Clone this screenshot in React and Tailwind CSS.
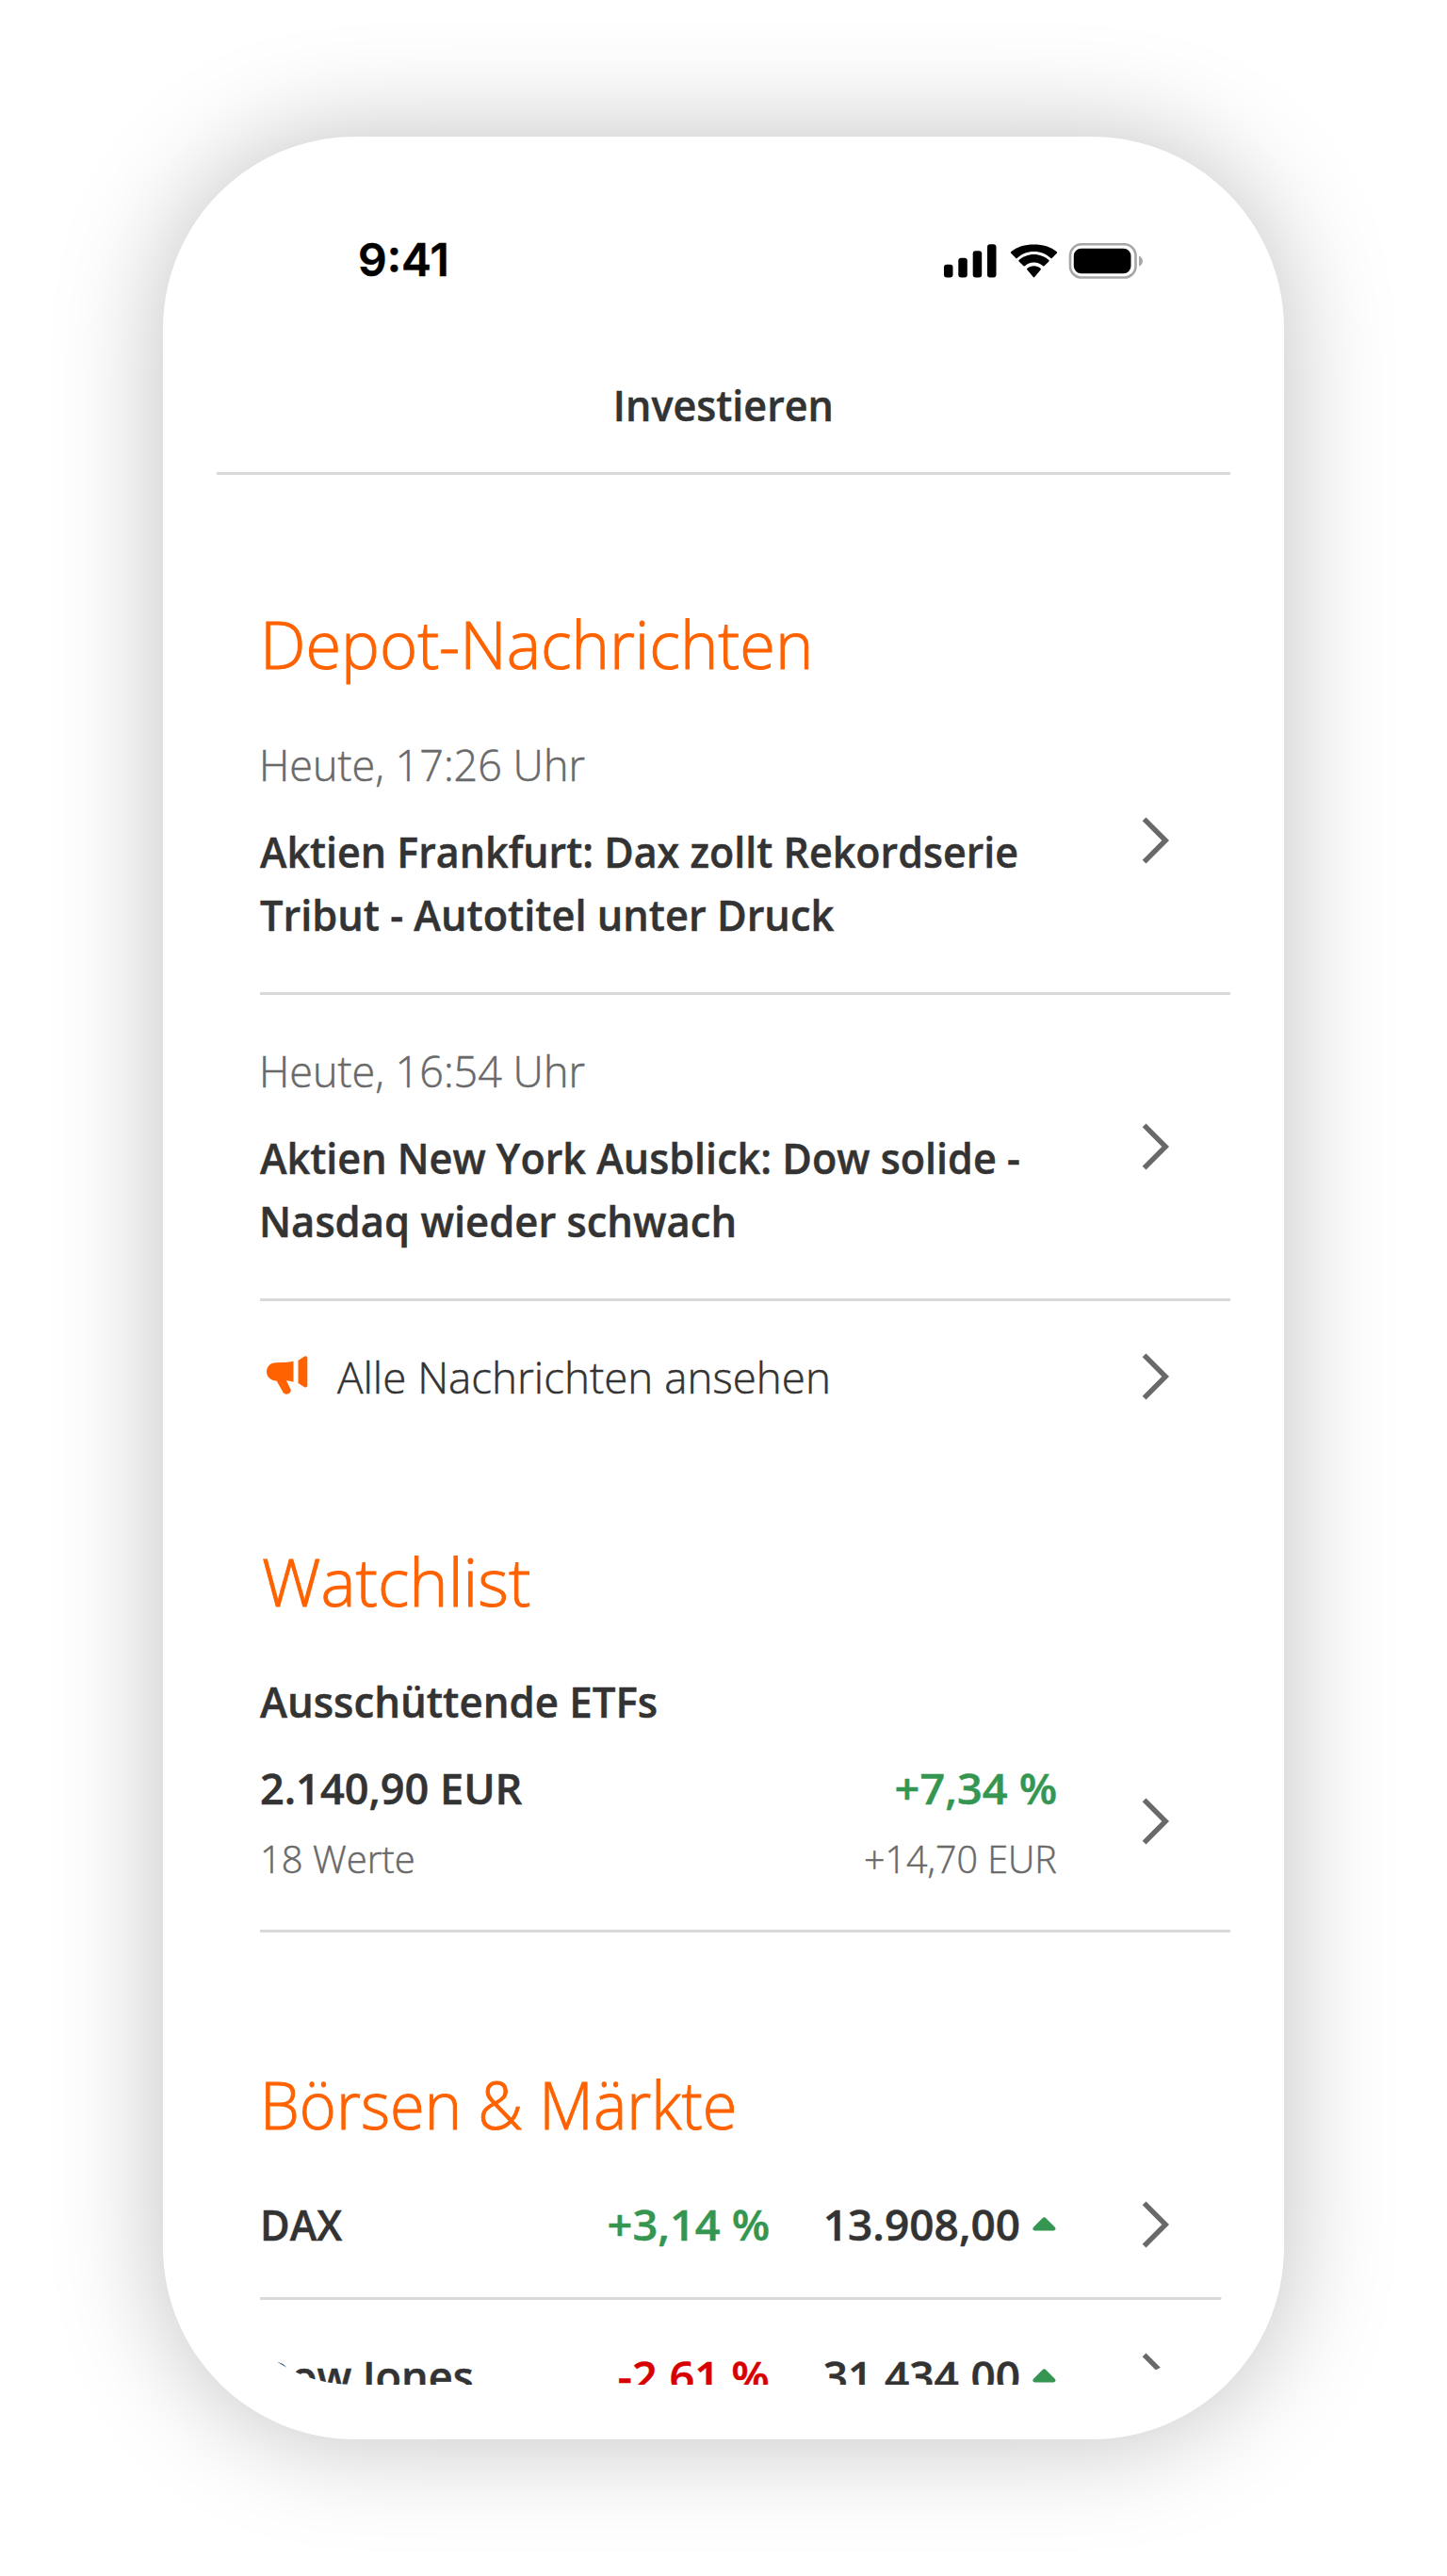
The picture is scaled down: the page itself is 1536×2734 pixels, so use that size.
import React from 'react';

const news = [
  {
    time: 'Heute, 17:26 Uhr',
    lines: [
      { text: 'Aktien Frankfurt: Dax zollt Rekordserie', className: 'scale-x-[0.935]' },
      { text: 'Tribut - Autotitel unter Druck', className: 'scale-x-[0.942]' },
    ],
  },
  {
    time: 'Heute, 16:54 Uhr',
    lines: [
      { text: 'Aktien New York Ausblick: Dow solide -', className: 'scale-x-[0.938]' },
      { text: 'Nasdaq wieder schwach', className: 'scale-x-[0.947] -ml-px' },
    ],
  },
];

const markets = [
  { name: 'DAX', change: '+3,14 %', value: '13.908,00', nameClass: 'scale-x-[0.94]', color: 'text-[#349651]' },
  { name: 'Dow Jones', change: '-2,61 %', value: '31.434,00', nameClass: 'scale-x-[0.98]', color: 'text-[#d70000]' },
];

const Chevron = ({ className = '' }) => (
  <svg className={`shrink-0 ${className}`} width="30" height="52" viewBox="0 0 30 52" fill="none" stroke="#696969" strokeWidth="5.4">
    <path d="M2.6 3.4 25.2 26 2.6 48.6" />
  </svg>
);

const Divider = ({ className = '' }) => <div className={`h-[3px] bg-[#d9d9d9] ${className}`} />;

const Heading = ({ children, className }) => (
  <h2 className={`w-max origin-left whitespace-nowrap text-[69.5px] leading-[80px] font-light text-[#ff6200] [-webkit-text-stroke:1px] ${className}`}>
    {children}
  </h2>
);

const StatusBar = () => (
  <div className="flex h-[60px] items-center justify-between pr-[149px] pl-[207px]">
    <span className="font-['Inter'] text-[48px] leading-[60px] font-semibold text-black">9:41</span>
    <svg className="mt-[2px]" width="212" height="38" viewBox="0 0 212 38">
      {/* signal */}
      <rect x="0" y="22.7" width="9.5" height="13.7" rx="3" />
      <rect x="15.3" y="15.7" width="9.5" height="20.7" rx="3" />
      <rect x="30.7" y="8.3" width="9.5" height="28.1" rx="3" />
      <rect x="46" y="1.3" width="9.5" height="35.1" rx="3" />
      {/* wifi */}
      <path d="M95.5 9c6.9 0 13.1 2.6 17.9 7 .4.3.9.3 1.200 0l5.300-5.300c.4-.4.4-1 0-1.400C113.500 3.700 104.900 1.400 95.500 1.400S77.500 3.700 71.100 9.300c-.4.400-.4 1 0 1.400l5.300 5.300c.3.300.8.300 1.200 0C82.400 11.600 88.600 9 95.500 9z" />
      <path d="M95.5 20.600c3.700 0 7.100 1.400 9.700 3.700.4.300.9.300 1.300 0l4.900-4.800c.4-.4.4-1 0-1.400-4.200-3.900-9.800-6.200-15.900-6.200s-11.700 2.300-15.900 6.200c-.4.4-.4 1 0 1.400l4.900 4.800c.4.300.9.300 1.300 0 2.600-2.300 6-3.700 9.700-3.700z" />
      <path d="M102.7 28.300c.4-.4.4-1 0-1.400-2-1.700-4.500-2.700-7.200-2.700s-5.200 1-7.200 2.700c-.4.4-.4 1 0 1.400l6.500 7.700c.4.500 1 .5 1.400 0z" />
      {/* battery */}
      <rect x="134" y="1.3" width="69.5" height="35.2" rx="12" fill="none" stroke="#a6a6a6" strokeWidth="2.6" />
      <rect x="137.8" y="5.7" width="60.7" height="26.6" rx="8" />
      <path d="M207 13.4c2.400 1 4 3.200 4 5.700s-1.600 4.700-4 5.700z" fill="#a6a6a6" />
    </svg>
  </div>
);

const Megaphone = () => (
  <svg className="mt-[-3px] ml-[7px] shrink-0" width="44" height="41" viewBox="0 0 44 41" fill="#ff6200">
    <path d="M9.5 7.200c7 0 13-.1 19-1.400v22c-2.400-.9-4.900-1.400-7.600-1.500l4.500 9c1.700 3.800-3.700 6.900-6.900 4.500-.9-.6-1.300-1.300-1.700-2.200L10.600 26.500C4.500 26.600 0 22.200 0 16.800S4.200 7.200 9.500 7.200z" />
    <path d="M33.500 5 39.900.8c1.700-1.200 3.400-.4 3.400 1.500v28.900c0 2.100-1.700 2.800-3.400 1.700l-6.400-4z" />
  </svg>
);

const NewsItem = ({ time, lines }) => (
  <div className="flex h-[276px]">
    <div className="flex-1 pt-px">
      <p className="-ml-px w-max origin-left scale-x-[0.977] font-light text-[#696969]">{time}</p>
      <div className="mt-[25px] font-semibold">
        {lines.map((line) => (
          <p key={line.text} className={`w-max origin-left whitespace-nowrap ${line.className}`}>{line.text}</p>
        ))}
      </div>
    </div>
    <Chevron className="mt-[89px] mr-[64px]" />
  </div>
);

const MarketRow = ({ name, change, value, nameClass, color }) => (
  <div className="flex h-[67px] items-center font-semibold">
    <div className="flex w-[541px] justify-between">
      <span className={`origin-left ${nameClass}`}>{name}</span>
      <span className={`origin-right scale-x-[1.02] ${color}`}>{change}</span>
    </div>
    <span className="w-[266px] text-right">{value}</span>
    <svg className="ml-[13px]" width="25" height="15" viewBox="0 0 25 15" fill="#349651">
      <path d="M11 .8c.9-.9 1.900-.9 2.800 0l9.700 9.700c1.800 1.900 1 4-1.300 4H2.600c-2.300 0-3.100-2.100-1.300-4z" />
    </svg>
    <Chevron className="mr-[64px] ml-auto" />
  </div>
);

export default function App() {
  return (
    <div className="h-[2734px] w-[1536px] overflow-hidden bg-white pt-[145px] pl-[173px] font-['Open_Sans','Noto_Sans',sans-serif] text-[46px] leading-[67px] text-[#333333] [-webkit-text-stroke:0.5px]">
      <div className="h-[2444px] w-[1190px] rounded-[204px] bg-white pt-[101px] shadow-[0_0_115px_rgba(0,0,0,0.25)]">
        <StatusBar />

        {/* Screen */}
        <div className="ml-[56px] h-[2225px] w-[1078px] overflow-hidden rounded-b-[146px] pt-[90px]">
          <h1 className="text-center font-semibold">
            <span className="inline-block scale-x-[0.937]">Investieren</span>
          </h1>
          <Divider className="mx-px mt-[38px]" />

          <div className="pr-px pl-[47px]">
            <Heading className="mt-[139px] scale-x-[0.987]">Depot-Nachrichten</Heading>
            <div className="mt-[54px]">
              <NewsItem {...news[0]} />
              <Divider className="mb-[46px]" />
              <NewsItem {...news[1]} />
              <Divider className="mb-[46px]" />
            </div>
            <div className="flex items-center">
              <Megaphone />
              <span className="ml-[31px] origin-left scale-x-[0.994] pt-px font-light">Alle Nachrichten ansehen</span>
              <Chevron className="mr-[64px] ml-auto" />
            </div>

            <Heading className="mt-[143px] ml-[2px] scale-x-[1.008]">Watchlist</Heading>
            <div className="mt-[54px] flex h-[276px]">
              <div className="w-[846px]">
                <p className="w-max origin-left scale-x-[0.952] font-semibold">Ausschüttende ETFs</p>
                <div className="mt-[25px] flex justify-between font-semibold">
                  <span className="origin-left scale-x-[0.98]">2.140,90 EUR</span>
                  <span className="origin-right scale-x-[1.02] text-[#349651]">+7,34 %</span>
                </div>
                <div className="mt-[12px] flex justify-between text-[40px] leading-[60px] font-light text-[#696969]">
                  <span>18 Werte</span>
                  <span className="origin-right scale-x-[0.985]">+14,70 EUR</span>
                </div>
              </div>
              <Chevron className="mt-[135px] mr-[64px] ml-auto" />
            </div>
            <Divider />

            <Heading className="mt-[142px] scale-x-[0.96]">Börsen & Märkte</Heading>
            <div className="mt-[54px]">
              <MarketRow {...markets[0]} />
              <Divider className="mt-[44px] mb-[47px]" />
              <MarketRow {...markets[1]} />
            </div>
          </div>
        </div>
      </div>
    </div>
  );
}
